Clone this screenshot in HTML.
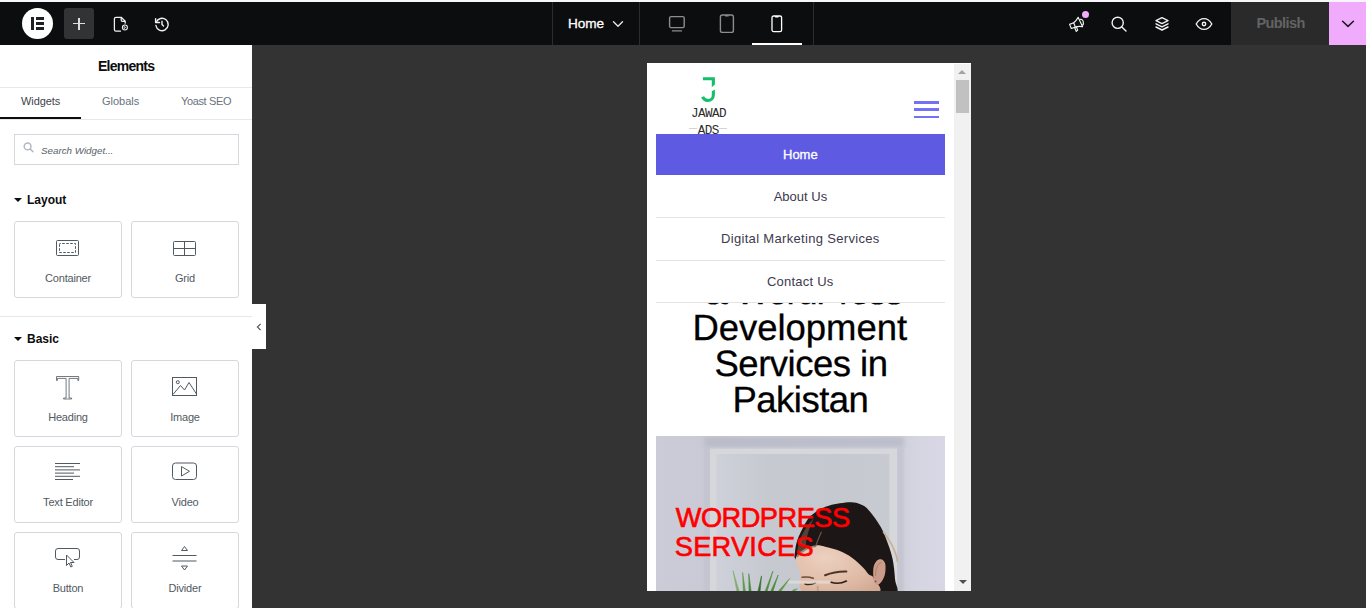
<!DOCTYPE html>
<html>
<head>
<meta charset="utf-8">
<title>Elementor</title>
<style>
*{box-sizing:border-box;margin:0;padding:0}
html,body{width:1366px;height:608px;overflow:hidden;background:#333;font-family:"Liberation Sans",sans-serif;}
.abs{position:absolute}
#topline{left:0;top:0;width:1366px;height:2px;background:#f6f6fb}
#topbar{left:0;top:2px;width:1366px;height:43px;background:#0c0d0e}
#panel{left:0;top:45px;width:252px;height:563px;background:#fff;overflow:hidden}
#canvas{left:252px;top:45px;width:1114px;height:563px;background:#333}
.t{position:absolute;white-space:nowrap;line-height:1}
.card{position:absolute;width:108px;height:77px;border:1px solid #d5d8dc;border-radius:3px;background:#fff}
.card .lbl{position:absolute;left:0;right:0;text-align:center;font-size:11px;color:#515962;line-height:1;letter-spacing:-0.200px}
.card svg{position:absolute}
.sep{position:absolute;background:#e6e8ea;height:1px}
.hd{font-size:36.500px;color:#000;-webkit-text-stroke:0.300px #000;text-rendering:geometricPrecision;}
.mi{font-size:13px;color:#3d3a4e;}
</style>
</head>
<body>
<div class="abs" id="topline"></div>
<div class="abs" id="topbar">
  <!-- logo -->
  <div class="abs" style="left:22px;top:6px;width:31px;height:31px;border-radius:50%;background:#fff"></div>
  <div class="abs" style="left:31px;top:15px;width:3px;height:13px;background:#1f2124"></div>
  <div class="abs" style="left:36px;top:15px;width:8px;height:3px;background:#1f2124"></div>
  <div class="abs" style="left:36px;top:20px;width:8px;height:3px;background:#1f2124"></div>
  <div class="abs" style="left:36px;top:25px;width:8px;height:3px;background:#1f2124"></div>
  <!-- plus -->
  <div class="abs" style="left:64px;top:6px;width:30px;height:31px;border-radius:3px;background:#323335"></div>
  <div class="abs" style="left:73px;top:21px;width:11.600px;height:1.400px;background:#dedede"></div>
  <div class="abs" style="left:78.200px;top:15.900px;width:1.400px;height:11.800px;background:#dedede"></div>
  <!-- file icon -->
  <svg class="abs" style="left:112px;top:13px" width="20" height="20" viewBox="0 0 20 20" fill="none" stroke="#f1f1f1" stroke-width="1.250" stroke-linecap="round" stroke-linejoin="round">
    <path d="M8.5 16.2H4A1.6 1.6 0 0 1 2.4 14.6V3.9A1.6 1.6 0 0 1 4 2.3H9.2L13.2 6.3V8.2"/>
    <path d="M9.2 2.6V5A1.3 1.3 0 0 0 10.5 6.3H12.9"/>
    <circle cx="12.900" cy="12.500" r="2.500" stroke-width="1.100"/>
    <path d="M12.400 11.600L13.700 12.500L12.400 13.400Z" stroke-width="0.700"/>
  </svg>
  <!-- history icon -->
  <svg class="abs" style="left:152.300px;top:11.600px" width="20" height="20" viewBox="0 0 20 20" fill="none" stroke="#f1f1f1" stroke-width="1.4" stroke-linecap="round" stroke-linejoin="round">
    <path d="M4.2 8.3A6.2 6.2 0 1 1 3.9 11.5"/>
    <path d="M3.6 4.6V8.5H7.5"/>
    <path d="M10 7.3V10.4L11.5 11.9"/>
  </svg>

  <!-- center -->
  <div class="abs" style="left:552px;top:0;width:1px;height:43px;background:#2b2c2e"></div>
  <div class="abs" style="left:639px;top:0;width:1px;height:43px;background:#2b2c2e"></div>
  <div class="abs" style="left:813px;top:0;width:1px;height:43px;background:#2b2c2e"></div>
  <div class="t" id="tbhome" style="left:568px;top:15px;font-size:13.600px;color:#fff;-webkit-text-stroke:0.300px #fff;letter-spacing:-0.100px">Home</div>
  <svg class="abs" style="left:611px;top:17px" width="14" height="10" viewBox="0 0 14 10" fill="none" stroke="#e6e6e6" stroke-width="1.4" stroke-linecap="round" stroke-linejoin="round"><path d="M2.5 2.8L7 7.2L11.5 2.8"/></svg>
  <!-- desktop -->
  <svg class="abs" style="left:666px;top:11px" width="22" height="22" viewBox="0 0 22 22" fill="none" stroke="#8c8d8f" stroke-width="1.4" stroke-linecap="round" stroke-linejoin="round">
    <rect x="3.6" y="3.6" width="14.6" height="11" rx="1.4"/>
    <path d="M6.5 17.9H15.5"/>
  </svg>
  <!-- tablet -->
  <svg class="abs" style="left:716px;top:10px" width="22" height="24" viewBox="0 0 22 24" fill="none" stroke="#8c8d8f" stroke-width="1.4" stroke-linecap="round" stroke-linejoin="round">
    <rect x="4.400" y="3" width="13" height="17.400" rx="2"/>
    <path d="M9.600 3.700H12.200" stroke-width="1.500"/>
  </svg>
  <!-- mobile -->
  <svg class="abs" style="left:766px;top:10px" width="22" height="24" viewBox="0 0 22 24" fill="none" stroke="#ffffff" stroke-width="1.300" stroke-linecap="round" stroke-linejoin="round">
    <rect x="6" y="4" width="9.600" height="15.600" rx="1.600"/>
    <path d="M9.600 4.800H12" stroke-width="1.500"/>
  </svg>
  <div class="abs" style="left:752px;top:41px;width:50px;height:2px;background:#fff"></div>

  <!-- right icons -->
  <svg class="abs" style="left:1066px;top:10px" width="22" height="24" viewBox="1066 12 22 24" fill="none" stroke="#f1f1f1" stroke-width="1.150" stroke-linecap="round" stroke-linejoin="round">
    <path d="M1069.600 24.400L1073.700 22.700L1075.400 27.100L1071.300 28.500Z"/>
    <path d="M1073.700 22.700C1075.600 21.500 1077 19.600 1078.100 17.300L1082.600 26.800C1080.300 26.300 1077.800 26.300 1075.400 27.100"/>
    <path d="M1080.400 19.400C1081.700 18.900 1083 20.300 1083.300 22C1083.600 23.600 1083 25 1082.200 25.200"/>
    <path d="M1074.600 27.500L1076.300 31.400L1077.700 30.100L1076.400 26.900"/>
  </svg>
  <div class="abs" style="left:1081.600px;top:9.300px;width:7.200px;height:7.200px;border-radius:50%;background:#f0abfc"></div>
  <svg class="abs" style="left:1108px;top:12px" width="22" height="22" viewBox="0 0 22 22" fill="none" stroke="#f1f1f1" stroke-width="1.4" stroke-linecap="round" stroke-linejoin="round">
    <circle cx="9.7" cy="8.8" r="5.6"/>
    <path d="M13.8 12.9L18 17"/>
  </svg>
  <svg class="abs" style="left:1151px;top:11px" width="22" height="22" viewBox="0 0 22 22" fill="none" stroke="#f1f1f1" stroke-width="1.4" stroke-linecap="round" stroke-linejoin="round">
    <path d="M11 4.6L17 7.6L11 10.6L5 7.6Z"/>
    <path d="M5 10.8L11 13.8L17 10.8"/>
    <path d="M5 14L11 17L17 14"/>
  </svg>
  <svg class="abs" style="left:1193px;top:11px" width="22" height="22" viewBox="0 0 22 22" fill="none" stroke="#f1f1f1" stroke-width="1.4" stroke-linecap="round" stroke-linejoin="round">
    <path d="M3.2 11C5.2 7.4 7.8 5.6 11 5.6S16.8 7.4 18.8 11C16.8 14.6 14.2 16.4 11 16.4S5.2 14.6 3.2 11Z"/>
    <circle cx="11" cy="11" r="1.7"/>
  </svg>
  <div class="abs" style="left:1231px;top:0;width:98px;height:43px;background:#2a2a2b"></div>
  <div class="t" id="pub" style="left:1256.500px;top:14px;font-size:14.500px;font-weight:bold;color:#626363;letter-spacing:-0.600px">Publish</div>
  <div class="abs" style="left:1329px;top:0;width:37px;height:43px;background:#f0abfc"></div>
  <svg class="abs" style="left:1340px;top:16px" width="16" height="12" viewBox="0 0 16 12" fill="none" stroke="#1a1a1a" stroke-width="1.5" stroke-linecap="round" stroke-linejoin="round"><path d="M2.6 3.2L8 8.4L13.4 3.2"/></svg>
</div>

<div class="abs" id="panel">
  <div class="t" style="left:98px;top:14px;font-size:14px;font-weight:bold;color:#0c0d0e;letter-spacing:-0.750px" id="el">Elements</div>
  <div class="sep" style="left:0;top:42px;width:252px"></div>
  <div class="t" style="left:21px;top:51px;font-size:11px;color:#3f444b;letter-spacing:-0.100px" id="wd">Widgets</div>
  <div class="t" style="left:102px;top:51px;font-size:11px;color:#69727d;" id="gl">Globals</div>
  <div class="t" style="left:181px;top:51px;font-size:11px;color:#69727d;letter-spacing:-0.370px" id="ys">Yoast SEO</div>
  <div class="sep" style="left:0;top:74px;width:252px"></div>
  <div class="abs" style="left:0;top:72px;width:81px;height:2px;background:#0c0d0e"></div>
  <!-- search -->
  <div class="abs" style="left:14px;top:89px;width:225px;height:31px;border:1px solid #d5d8dc;border-radius:0"></div>
  <svg class="abs" style="left:22px;top:96px" width="14" height="14" viewBox="0 0 14 14" fill="none" stroke="#b3b9c0" stroke-width="1.500" stroke-linecap="round"><circle cx="5.600" cy="5.400" r="3.400"/><path d="M8.300 8.100L11 10.800"/></svg>
  <div class="t" style="left:41px;top:100.500px;font-size:9.800px;font-style:italic;color:#596169;letter-spacing:0" id="sw">Search Widget...</div>

  <!-- Layout -->
  <div class="abs" style="left:14px;top:153px;width:0;height:0;border-left:4px solid transparent;border-right:4px solid transparent;border-top:4px solid #0c0d0e"></div>
  <div class="t" style="left:27px;top:148.500px;font-size:12px;font-weight:bold;color:#0c0d0e;" id="ly">Layout</div>
  <div class="card" style="left:14px;top:176px">
    <svg style="left:41px;top:18px" width="24" height="18" viewBox="0 0 24 18" fill="none" stroke="#515962" stroke-width="1"><rect x="0.500" y="0.500" width="22" height="15" rx="1"/><rect x="3.500" y="3.500" width="16" height="9" stroke-dasharray="2.600 1.400" stroke-dashoffset="1.300"/></svg>
    <div class="lbl" style="top:51px">Container</div>
  </div>
  <div class="card" style="left:131px;top:176px">
    <svg style="left:41px;top:18px" width="24" height="18" viewBox="0 0 24 18" fill="none" stroke="#515962" stroke-width="1"><rect x="0.500" y="1.500" width="22" height="14" rx="1"/><path d="M11.500 1.500V15.500M0.500 8.500H22.500"/></svg>
    <div class="lbl" style="top:51px">Grid</div>
  </div>
  <div class="sep" style="left:0;top:271px;width:252px"></div>

  <!-- Basic -->
  <div class="abs" style="left:14px;top:292px;width:0;height:0;border-left:4px solid transparent;border-right:4px solid transparent;border-top:4px solid #0c0d0e"></div>
  <div class="t" style="left:27px;top:287.500px;font-size:12px;font-weight:bold;color:#0c0d0e;" id="bs">Basic</div>
  <div class="card" style="left:14px;top:315px">
    <svg style="left:40px;top:14px" width="26" height="26" viewBox="0 0 26 26" fill="none" stroke="#515962" stroke-width="0.800"><path d="M1.500 1.500H23.700V5.500H22.800V3.400H14.100V23H16.600V24H8.600V23H11.100V3.400H2.400V5.500H1.500Z"/></svg>
    <div class="lbl" style="top:51px">Heading</div>
  </div>
  <div class="card" style="left:131px;top:315px">
    <svg style="left:40px;top:15px" width="26" height="22" viewBox="0 0 26 22" fill="none" stroke="#515962" stroke-width="1"><rect x="0.5" y="1.5" width="24" height="18"/><circle cx="5.8" cy="6.2" r="1.5"/><path d="M1 18.5L8.5 9.5L12.5 14L17 6.5L24.5 18"/></svg>
    <div class="lbl" style="top:51px">Image</div>
  </div>
  <div class="card" style="left:14px;top:401px">
    <svg style="left:40px;top:15px" width="26" height="20" viewBox="0 0 26 20" fill="none" stroke="#515962" stroke-width="1"><path d="M0 1.500H25M0 4.700H19M0 7.900H25M0 11.100H19M0 14.300H25M0 17.500H18"/></svg>
    <div class="lbl" style="top:50px">Text Editor</div>
  </div>
  <div class="card" style="left:131px;top:401px">
    <svg style="left:40px;top:15px" width="26" height="20" viewBox="0 0 26 20" fill="none" stroke="#515962" stroke-width="1" stroke-linejoin="round"><rect x="0.5" y="1" width="24" height="16.5" rx="3"/><path d="M9.500 4.600L17.500 9.300L9.500 14Z"/></svg>
    <div class="lbl" style="top:50px">Video</div>
  </div>
  <div class="card" style="left:14px;top:487px">
    <svg style="left:40px;top:14px" width="26" height="22" viewBox="0 0 26 22" fill="none" stroke="#515962" stroke-width="1" stroke-linejoin="round"><path d="M10 12.5H3A2.5 2.5 0 0 1 0.5 10V4A2.5 2.5 0 0 1 3 1.5H22A2.5 2.5 0 0 1 24.500 4V10A2.5 2.5 0 0 1 22 12.500H19"/><path d="M11.500 8V18.500L14 16L15.800 20L17.300 19.300L15.500 15.500H19Z" fill="#fff"/></svg>
    <div class="lbl" style="top:50px">Button</div>
  </div>
  <div class="card" style="left:131px;top:487px">
    <svg style="left:40px;top:12px" width="26" height="26" viewBox="0 0 26 26" fill="none" stroke="#515962" stroke-width="1" stroke-linejoin="round"><path d="M0.500 10.500H24.500M0.500 16H24.500"/><path d="M12.500 1.500L15.500 5.500H9.500Z"/><path d="M12.500 25L15.500 21H9.500Z"/></svg>
    <div class="lbl" style="top:50px">Divider</div>
  </div>
</div>

<div class="abs" id="canvas"></div>
<!-- collapse handle -->
<div class="abs" style="left:252px;top:304.300px;width:14px;height:45.200px;background:#fff"></div>
<svg class="abs" style="left:255px;top:322px" width="8" height="10" viewBox="0 0 8 10" fill="none" stroke="#515962" stroke-width="1.200"><path d="M5.600 1.800L2.400 5L5.600 8.200"/></svg>

<!-- PREVIEW -->
<div class="abs" id="frame" style="left:647px;top:62.500px;width:324px;height:528.500px;background:#fff;overflow:hidden">
</div>
<!-- preview contents in page coordinates -->
<div class="abs" id="pv" style="left:0;top:0;width:1366px;height:591px;overflow:hidden;pointer-events:none">
  <!-- heading -->
  <div class="t hd" id="h0" style="left:704px;top:273.900px;letter-spacing:-1.500px;">&amp; WordPress</div>
  <div class="abs" style="left:647px;top:260px;width:307px;height:42.700px;background:#fff"></div>
  <div class="t hd" id="h1" style="left:692.500px;top:310px;letter-spacing:-0.050px;">Development</div>
  <div class="t hd" id="h2" style="left:714.500px;top:346px;letter-spacing:-0.500px;">Services in</div>
  <div class="t hd" id="h3" style="left:732.500px;top:382px;letter-spacing:-0.520px;">Pakistan</div>

  <!-- logo -->
  <svg class="abs" style="left:698px;top:75px" width="20" height="30" viewBox="0 0 20 30" fill="#14bf6c" stroke="none"><path d="M4.900 2.200H16.900V9.400L13.800 12.300V5.300H4.900Z"/><path d="M13.800 16.300L16.900 14.600V19.950A7.050 7.050 0 0 1 9.850 27A7.050 7.050 0 0 1 3.200 22.300L6.100 21.200A3.950 3.950 0 0 0 9.850 23.900A3.950 3.950 0 0 0 13.800 19.950Z"/></svg>
  <div class="abs" style="left:689.300px;top:127.900px;width:8px;height:1px;background:#d4d4d4"></div><div class="abs" style="left:719.300px;top:127.900px;width:8px;height:1px;background:#d4d4d4"></div>
  <div class="t" id="lg1" style="left:691px;top:107.800px;font-family:'Liberation Mono',monospace;font-size:12.600px;letter-spacing:-0.560px;color:#2b2b2b;">JAWAD</div>
  <div class="t" id="lg2" style="left:697.700px;top:125px;font-family:'Liberation Mono',monospace;font-size:12.600px;letter-spacing:-0.560px;color:#2b2b2b;">ADS</div>
  <!-- hamburger -->
  <div class="abs" style="left:914px;top:101px;width:25px;height:2.800px;background:#7471f6"></div>
  <div class="abs" style="left:914px;top:108px;width:25px;height:2.900px;background:#7471f6"></div>
  <div class="abs" style="left:914px;top:115.800px;width:25px;height:2.300px;background:#7471f6"></div>

  <!-- menu -->
  <div class="abs" style="left:656px;top:134px;width:289px;height:40.800px;background:#5e5ae2"></div>
  <div class="t mi" id="m1" style="left:783px;top:148px;color:#fff;-webkit-text-stroke:0.300px #fff;">Home</div>
  <div class="t mi" id="m2" style="left:773.700px;top:190px;">About Us</div>
  <div class="abs" style="left:656px;top:217px;width:289px;height:1px;background:#e4e4e4"></div>
  <div class="t mi" id="m3" style="left:721px;top:232px;letter-spacing:0.320px;">Digital Marketing Services</div>
  <div class="abs" style="left:656px;top:259.800px;width:289px;height:1px;background:#e4e4e4"></div>
  <div class="t mi" id="m4" style="left:767px;top:275px;letter-spacing:0.220px;">Contact Us</div>
  <div class="abs" style="left:656px;top:302.300px;width:289px;height:1px;background:#e4e4e4"></div>

  <!-- photo -->
  <svg class="abs" id="photo" style="left:656px;top:436px" width="289" height="155" viewBox="0 0 289 155">
    <defs>
      <linearGradient id="wall" x1="0" y1="0" x2="1" y2="0">
        <stop offset="0" stop-color="#cbccd7"/><stop offset="0.170" stop-color="#c9cad5"/><stop offset="0.840" stop-color="#cfcfdb"/><stop offset="0.900" stop-color="#d5d4e1"/><stop offset="1" stop-color="#d9d7e5"/>
      </linearGradient>
      <linearGradient id="fr" x1="0" y1="0" x2="1" y2="0">
        <stop offset="0" stop-color="#cfd1da"/><stop offset="0.300" stop-color="#c7c9d1"/><stop offset="0.700" stop-color="#c5c8cf"/><stop offset="1" stop-color="#c9cbd3"/>
      </linearGradient>
      <radialGradient id="skin" cx="0.350" cy="0.250" r="0.900">
        <stop offset="0" stop-color="#ecd0bf"/><stop offset="0.600" stop-color="#dfbba6"/><stop offset="1" stop-color="#cfa58f"/>
      </radialGradient>
      <filter id="b1" x="-10%" y="-10%" width="120%" height="120%"><feGaussianBlur stdDeviation="0.700"/></filter>
      <filter id="b2" x="-20%" y="-50%" width="140%" height="200%"><feGaussianBlur stdDeviation="2"/></filter>
      <filter id="b3" x="-20%" y="-20%" width="140%" height="140%"><feGaussianBlur stdDeviation="1.200"/></filter>
    </defs>
    <rect width="289" height="155" fill="url(#wall)"/>
    <rect x="48" y="1" width="200" height="10" fill="#b3b5c2" opacity="0.650" filter="url(#b2)"/>
    <rect x="47.500" y="12" width="7" height="150" fill="#b5b7c3" opacity="0.250" filter="url(#b3)"/>
    <rect x="241" y="12" width="7" height="150" fill="#b9bac8" opacity="0.450" filter="url(#b3)"/>
    <g filter="url(#b1)">
      <rect x="54" y="12.700" width="187" height="150" fill="#d5d7db"/>
      <rect x="60.400" y="18" width="173.100" height="140" fill="url(#fr)"/>
      
    </g>
    <!-- plant -->
    <g filter="url(#b1)">
      <path d="M77.0 134.7L81.1 156.3L83.3 155.7Z" fill="#7fae6c" stroke="#7fae6c" stroke-width="0.600" stroke-linejoin="round"/>
      <path d="M86.6 136.4L87.3 156.1L89.5 155.9Z" fill="#5f9a4c" stroke="#5f9a4c" stroke-width="0.600" stroke-linejoin="round"/>
      <path d="M92.8 137.7L93.0 156.1L95.2 155.9Z" fill="#4a8a3a" stroke="#4a8a3a" stroke-width="0.600" stroke-linejoin="round"/>
      <path d="M105.5 139.9L101.8 155.8L104.0 156.2Z" fill="#356f2b" stroke="#356f2b" stroke-width="0.600" stroke-linejoin="round"/>
      <path d="M116.9 135.1L108.9 155.7L110.9 156.3Z" fill="#4f8f3f" stroke="#4f8f3f" stroke-width="0.600" stroke-linejoin="round"/>
      <path d="M122.2 139.0L114.6 155.6L116.6 156.4Z" fill="#4a8c3a" stroke="#4a8c3a" stroke-width="0.600" stroke-linejoin="round"/>
      <path d="M133.6 142.6L122.2 155.3L124.0 156.7Z" fill="#5d9a49" stroke="#5d9a49" stroke-width="0.600" stroke-linejoin="round"/>
      <path d="M141.5 152.7L136.6 154.0L137.6 156.0Z" fill="#6aa455" stroke="#6aa455" stroke-width="0.600" stroke-linejoin="round"/>
    </g>
    <!-- woman -->
    <g filter="url(#b1)">
      <path d="M139.5 123.0C137.7 120.7 138.6 119.3 139.0 116.0C139.4 112.7 139.8 108.3 141.8 103.0C143.9 97.7 148.3 88.5 151.3 84.0C154.3 79.5 156.3 78.4 160.0 76.0C163.7 73.6 167.8 71.0 173.5 69.4C179.2 67.8 188.8 66.3 194.2 66.2C199.6 66.1 202.8 67.5 206.0 69.0C209.2 70.5 210.3 71.3 213.4 75.0C216.5 78.7 221.7 85.6 224.8 91.1C227.9 96.5 229.9 102.4 231.9 107.7C233.9 113.0 235.4 117.2 236.6 123.1C237.8 129.0 238.7 137.4 239.0 143.2C239.3 149.0 245.1 155.5 238.6 158.0C232.1 160.5 214.8 162.7 200.0 158.0C185.2 153.3 160.1 135.8 150.0 130.0C139.9 124.2 141.3 125.3 139.5 123.0Z" fill="#1c1512"/>
      <path d="M141 120C141 106 148 92 158 82C152 94 149 106 150 116Z" fill="#6a5546" opacity="0.700"/>
      <path d="M139.8 122.5C140.4 118.5 144.5 115.8 147.8 113.6C151.1 111.4 156.1 110.0 159.6 109.5C163.1 109.0 165.1 109.8 169.1 110.7C173.1 111.6 178.8 112.9 183.3 114.8C187.8 116.7 192.4 119.1 196.3 121.9C200.2 124.7 204.2 128.6 207.0 131.4C209.8 134.2 211.2 136.7 212.9 138.5C214.7 140.3 216.3 138.8 217.5 142.0C218.7 145.2 231.1 155.3 220.0 158.0C208.9 160.7 163.6 161.4 151.0 158.0C138.4 154.6 146.1 143.2 144.2 137.3C142.3 131.4 139.2 126.5 139.8 122.5Z" fill="url(#skin)"/>
      <path d="M165.500 95.800C163 101 161 106 159.600 110.500" stroke="#7a6354" stroke-width="1.300" fill="none" opacity="0.800"/>
      <path d="M141 121C145 115 152 111 160 110" stroke="#5a4438" stroke-width="2" fill="none" opacity="0.500"/>
      <path d="M217.3 141.0C217.2 138.3 217.0 133.8 217.6 131.0C218.2 128.2 219.6 125.8 221.0 124.5C222.4 123.2 224.6 122.8 226.0 123.4C227.4 124.0 228.8 125.6 229.3 128.0C229.8 130.4 229.6 135.2 229.0 138.0C228.4 140.8 227.2 143.2 226.0 145.0C224.8 146.8 223.2 148.5 222.0 148.8C220.8 149.1 219.3 148.3 218.5 147.0C217.7 145.7 217.5 143.7 217.3 141.0Z" fill="#cb9c8a"/>
      <path d="M219.500 140C219.500 133 221.500 127.500 225.500 126.500" stroke="#b07f6e" stroke-width="1" fill="none"/>
      <path d="M227.200 95.800C233 103 237.500 111 240.200 119.500C241 122 241.300 124 241.400 126" stroke="#c9b094" stroke-width="1.700" fill="none"/>
      <path d="M169.100 139.300C176 136.500 183 135.300 190.400 135.500" stroke="#4d3528" stroke-width="2" fill="none" stroke-linecap="round"/>
      <path d="M146 141.200C150 140.600 154 141 157.300 142.200" stroke="#6d4d3d" stroke-width="1.500" fill="none" stroke-linecap="round"/>
      <path d="M175 146.300C180 147.900 185.500 147.500 190.400 145" stroke="#2b1d17" stroke-width="1.600" fill="none" stroke-linecap="round"/>
      <path d="M149 148C152.500 149 156 148.600 159.600 146.800" stroke="#3a2a22" stroke-width="1.500" fill="none" stroke-linecap="round"/>
      <path d="M162 150C161 152 161.500 154 163 156" stroke="#c79a86" stroke-width="1.500" fill="none"/>
      <circle cx="219.600" cy="145.300" r="0.900" fill="#555"/>
      <rect x="132.400" y="144.600" width="42" height="3" fill="#e4dfdc" opacity="0.700"/>
    </g>
  </svg>
  <div class="t" id="w1" style="left:675.800px;top:504.200px;letter-spacing:-0.500px;font-size:27.200px;color:#ff0000;-webkit-text-stroke:0.650px #ff0000;">WORDPRESS</div>
  <div class="t" id="w2" style="left:674.800px;top:533.200px;letter-spacing:0.250px;font-size:27.200px;color:#ff0000;-webkit-text-stroke:0.650px #ff0000;">SERVICES</div>

  <!-- scrollbar -->
  <div class="abs" style="left:954px;top:64px;width:17px;height:527px;background:#f1f1f1"></div>
  <div class="abs" style="left:956.200px;top:80px;width:12.600px;height:32.700px;background:#c1c1c1"></div>
  <div class="abs" style="left:958.400px;top:69.800px;width:0;height:0;border-left:4px solid transparent;border-right:4px solid transparent;border-bottom:4.200px solid #a3a3a3"></div>
  <div class="abs" style="left:959px;top:579.500px;width:0;height:0;border-left:4px solid transparent;border-right:4px solid transparent;border-top:4.200px solid #505050"></div>
</div>
</body>
</html>
